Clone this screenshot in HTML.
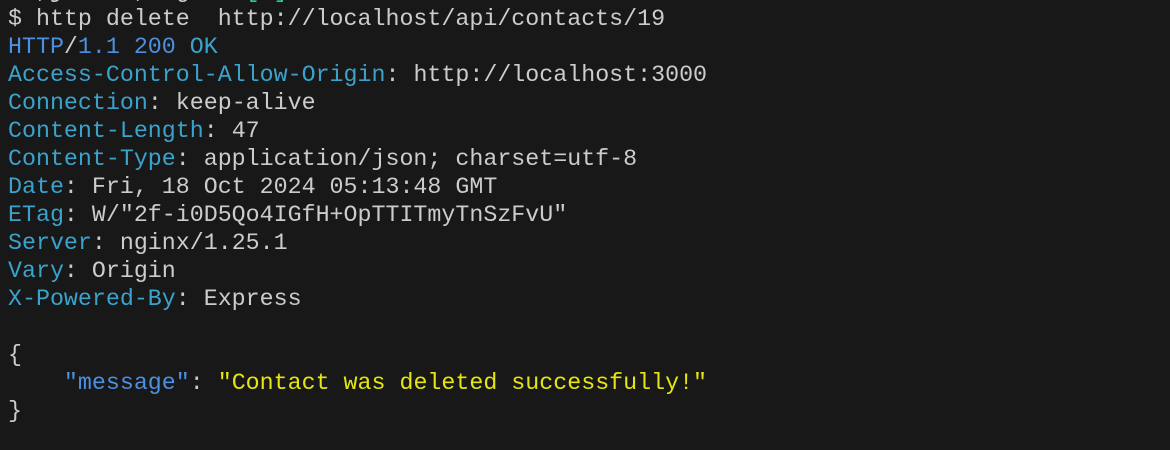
<!DOCTYPE html>
<html><head><style>
html,body{margin:0;padding:0;background:#181818;width:1170px;height:450px;overflow:hidden}
pre{margin:0;position:absolute;left:8px;top:-23px;font-family:"Liberation Mono",monospace;font-size:23.3px;line-height:28px;color:#cccccc;white-space:pre}
.b{color:#4d8fe0}.c{color:#3aa3cc}.y{color:#e5e512}.g{color:#23d18b}
</style></head><body><pre><span>  ,j  /  ,  g    </span><span class="g">[ ]</span>
$ http delete  http://localhost/api/contacts/19
<span class="b">HTTP</span>/<span class="b">1.1 200 </span><span class="c">OK</span>
<span class="c">Access-Control-Allow-Origin</span>: http://localhost:3000
<span class="c">Connection</span>: keep-alive
<span class="c">Content-Length</span>: 47
<span class="c">Content-Type</span>: application/json; charset=utf-8
<span class="c">Date</span>: Fri, 18 Oct 2024 05:13:48 GMT
<span class="c">ETag</span>: W/"2f-i0D5Qo4IGfH+OpTTITmyTnSzFvU"
<span class="c">Server</span>: nginx/1.25.1
<span class="c">Vary</span>: Origin
<span class="c">X-Powered-By</span>: Express

{
    <span class="b">"message"</span>: <span class="y">"Contact was deleted successfully!"</span>
}
</pre></body></html>
